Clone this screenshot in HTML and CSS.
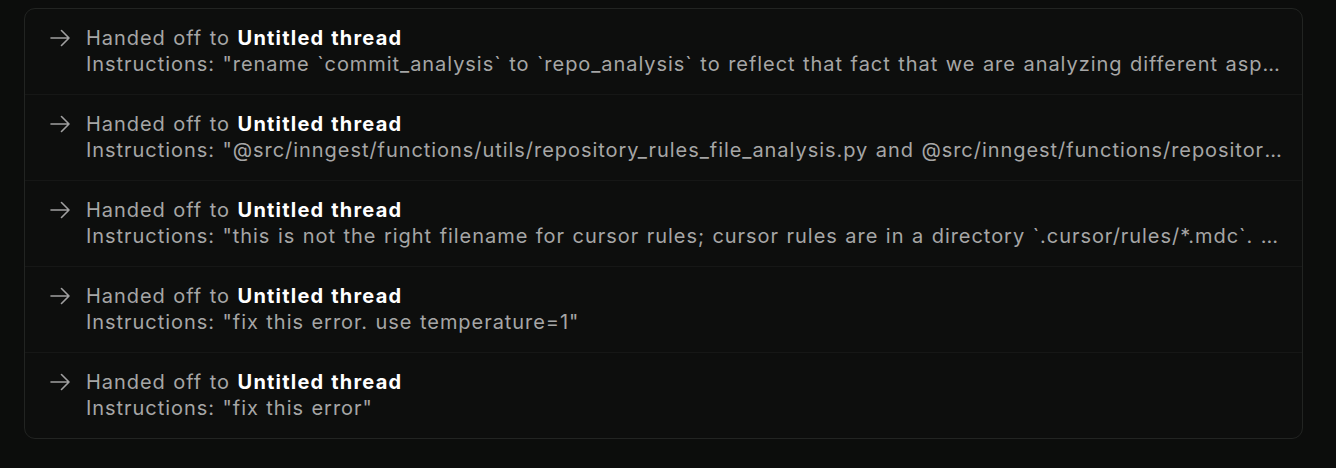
FILE: index.html
```html
<!DOCTYPE html>
<html>
<head>
<meta charset="utf-8">
<link rel="stylesheet" href="styles.css">
</head>
<body>
<div class="card">
  <div class="row">
    <svg class="arrow" viewBox="0 0 20 18"><path d="M1 9H19M11.5 1.5L19 9l-7.5 7.5"/></svg>
    <div class="body">
      <div class="title">Handed off to <b>Untitled thread</b></div>
      <div class="desc">Instructions: "rename `commit_analysis` to `repo_analysis` to reflect that fact that we are analyzing different aspects of the repository, not only commits"</div>
    </div>
  </div>
  <div class="row">
    <svg class="arrow" viewBox="0 0 20 18"><path d="M1 9H19M11.5 1.5L19 9l-7.5 7.5"/></svg>
    <div class="body">
      <div class="title">Handed off to <b>Untitled thread</b></div>
      <div class="desc">Instructions: "@src/inngest/functions/utils/repository_rules_file_analysis.py and @src/inngest/functions/repository_analysis.py"</div>
    </div>
  </div>
  <div class="row">
    <svg class="arrow" viewBox="0 0 20 18"><path d="M1 9H19M11.5 1.5L19 9l-7.5 7.5"/></svg>
    <div class="body">
      <div class="title">Handed off to <b>Untitled thread</b></div>
      <div class="desc">Instructions: "this is not the right filename for cursor rules; cursor rules are in a directory `.cursor/rules/*.mdc`. Please fix"</div>
    </div>
  </div>
  <div class="row">
    <svg class="arrow" viewBox="0 0 20 18"><path d="M1 9H19M11.5 1.5L19 9l-7.5 7.5"/></svg>
    <div class="body">
      <div class="title">Handed off to <b>Untitled thread</b></div>
      <div class="desc">Instructions: "fix this error. use temperature=1"</div>
    </div>
  </div>
  <div class="row">
    <svg class="arrow" viewBox="0 0 20 18"><path d="M1 9H19M11.5 1.5L19 9l-7.5 7.5"/></svg>
    <div class="body">
      <div class="title">Handed off to <b>Untitled thread</b></div>
      <div class="desc">Instructions: "fix this error"</div>
    </div>
  </div>
</div>
</body>
</html>
```

FILE: styles.css
```css
html, body {
  margin: 0;
  background: #0c0d0c;
}
body {
  padding: 8px 33px 0 24px;
  font-family: Inter, "Liberation Sans", sans-serif;
}
.card {
  border: 1px solid #222422;
  border-radius: 11px;
  background: #0d0e0d;
  overflow: hidden;
}
.row {
  display: flex;
  align-items: flex-start;
  gap: 16px;
  padding: 16px 18px 17px 25px;
  border-bottom: 1px solid #161716;
}
.row:last-child {
  border-bottom: none;
}
.arrow {
  flex: none;
  width: 20px;
  height: 18px;
  margin-top: 4px;
  fill: none;
  stroke: #a0a0a0;
  stroke-width: 1.6;
  stroke-linecap: round;
  stroke-linejoin: round;
}
.body {
  min-width: 0;
  flex: 1;
  font-size: 20px;
  line-height: 26px;
  letter-spacing: 0.95px;
  word-spacing: 1px;
  color: #a6a6a6;
}
.title b {
  color: #ffffff;
  font-weight: 700;
  letter-spacing: 1.2px;
}
.desc {
  white-space: nowrap;
  overflow: hidden;
  text-overflow: ellipsis;
}
```
